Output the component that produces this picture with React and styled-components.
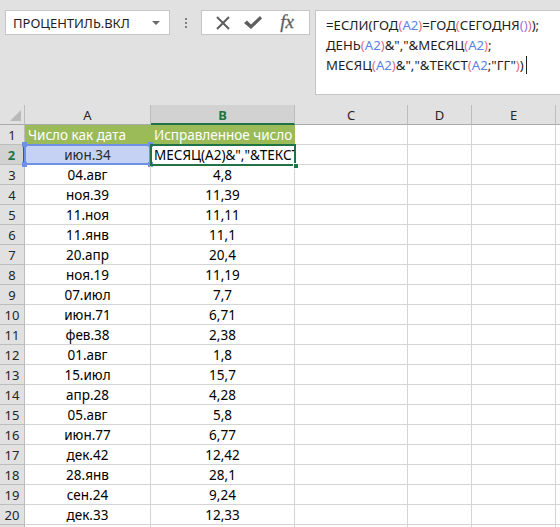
import React from "react";
import styled, { createGlobalStyle, css } from "styled-components";

const Global = createGlobalStyle`
  html, body { margin: 0; padding: 0; background: #fff; }
  body { font-family: "Noto Sans", "Open Sans", sans-serif; }
  * { box-sizing: border-box; }
`;

const Page = styled.div`
  width: 560px;
  height: 527px;
  overflow: hidden;
  background: #fff;
`;

const TopBar = styled.div`
  height: 105px;
  background: #e1e1e1;
  display: flex;
  align-items: flex-start;
  padding-top: 10px;
`;

const NameBox = styled.div`
  margin-left: 5px;
  width: 165px;
  height: 25px;
  background: #fff;
  border: 1px solid #c6c6c6;
  display: flex;
  align-items: center;
  justify-content: space-between;
  padding: 0 7px 0 7px;
  font-size: 13px;
  color: #1e1e1e;
`;

const DropArrow = styled.span`
  width: 0;
  height: 0;
  border-left: 4px solid transparent;
  border-right: 4px solid transparent;
  border-top: 4px solid #6a6a6a;
  margin-right: 2px;
`;

const Dots = styled.div`
  width: 31px;
  height: 25px;
  display: flex;
  flex-direction: column;
  align-items: center;
  justify-content: center;
  gap: 2px;
  span {
    width: 2px;
    height: 2px;
    background: #808080;
  }
`;

const IconBox = styled.div`
  width: 109px;
  height: 25px;
  background: #fff;
  border: 1px solid #c6c6c6;
  display: flex;
  align-items: center;
  padding-left: 9px;
`;

const IconSlot = styled.div`
  width: ${(p) => p.$w}px;
  display: flex;
  align-items: center;
  justify-content: center;
`;

const Fx = styled.span`
  font-family: "Liberation Serif", "DejaVu Serif", serif;
  font-style: italic;
  font-size: 19px;
  color: #5e5e5e;
  line-height: 1;
  margin-top: -2px;
  -webkit-text-stroke: 0.3px #5e5e5e;
`;

const FormulaBar = styled.div`
  margin-left: 5px;
  flex: 1;
  height: 85px;
  background: #fff;
  border: 1px solid #c6c6c6;
  border-right: none;
  padding: 4px 0 0 10px;
  font-size: 13.2px;
  line-height: 20px;
  color: #1e1e1e;
`;

const Line = styled.div`
  white-space: nowrap;
`;

const colors = { p: "#ea6b8b", b: "#5a84e4", v: "#a56ee0" };
const Tok = styled.span`
  color: ${(p) => colors[p.$c] || "#1e1e1e"};
`;

const Caret = styled.span`
  display: inline-block;
  width: 1px;
  height: 18px;
  background: #222;
  vertical-align: -4px;
  margin-left: 2px;
`;

const Grid = styled.div`
  display: grid;
  grid-template-columns: 25px 126px 144px 113px 64px 84px 1fr;
  grid-auto-rows: 20px;
`;

const HeadCell = styled.div`
  background: ${(p) => (p.$sel ? "#d2d2d2" : "#e1e1e1")};
  border-right: 1px solid #bdbdbd;
  border-bottom: ${(p) => (p.$sel ? "2px solid #217346" : "1px solid #ababab")};
  display: flex;
  align-items: center;
  justify-content: center;
  font-size: 13px;
  color: ${(p) => (p.$sel ? "#217346" : "#262626")};
  font-weight: ${(p) => (p.$sel ? 700 : 400)};
  padding-top: ${(p) => (p.$sel ? "1px" : "0")};
`;

const Corner = styled.div`
  background: #e1e1e1;
  border-right: 1px solid #bdbdbd;
  border-bottom: 1px solid #ababab;
  position: relative;
  &::after {
    content: "";
    position: absolute;
    right: 3px;
    bottom: 3px;
    width: 11px;
    height: 11px;
    background: #b9b9b9;
    clip-path: polygon(100% 0, 100% 100%, 0 100%);
  }
`;

const RowHead = styled.div`
  background: ${(p) => (p.$sel ? "#d2d2d2" : "#e1e1e1")};
  border-right: ${(p) => (p.$sel ? "2px solid #217346" : "1px solid #bdbdbd")};
  border-bottom: 1px solid #bdbdbd;
  display: flex;
  align-items: center;
  justify-content: center;
  font-size: 13px;
  color: ${(p) => (p.$sel ? "#217346" : "#262626")};
  font-weight: ${(p) => (p.$sel ? 700 : 400)};
`;

const Cell = styled.div`
  position: relative;
  border-right: 1px solid #d4d4d4;
  border-bottom: 1px solid #d4d4d4;
  display: flex;
  align-items: center;
  justify-content: ${(p) => (p.$left ? "flex-start" : "center")};
  padding: 0 3px;
  font-size: 13.5px;
  color: #000;
  white-space: nowrap;
  ${(p) =>
    p.$green &&
    css`
      background: #9bbb59;
      border-right-color: #9bbb59;
      color: #fff;
    `}
  ${(p) =>
    p.$range &&
    css`
      background: #c6d2f4;
      color: #2a2a2a;
    `}
  ${(p) =>
    p.$clip &&
    css`
      overflow: hidden;
      height: 100%;
    `}
`;

const RangeFrame = styled.div`
  position: absolute;
  left: -1px;
  top: -1px;
  right: -1px;
  bottom: -1px;
  border: 2px solid #6d91e6;
  pointer-events: none;
`;

const Handle = styled.span`
  position: absolute;
  width: 5px;
  height: 5px;
  background: ${(p) => p.$color};
  ${(p) => (p.$t ? "top: -3px;" : "bottom: -3px;")}
  ${(p) => (p.$l ? "left: -3px;" : "right: -3px;")}
`;

const ActiveFrame = styled.div`
  position: absolute;
  left: -1px;
  top: -1px;
  right: -1px;
  bottom: -1px;
  border: 2px solid #217346;
  pointer-events: none;
`;

const FillHandle = styled.span`
  position: absolute;
  right: -4px;
  bottom: -4px;
  width: 6px;
  height: 6px;
  background: #217346;
  border: 1px solid #fff;
`;

const ActiveWrap = styled.div`
  position: relative;
  z-index: 2;
`;

const data = [
  ["04.авг", "4,8"],
  ["ноя.39", "11,39"],
  ["11.ноя", "11,11"],
  ["11.янв", "11,1"],
  ["20.апр", "20,4"],
  ["ноя.19", "11,19"],
  ["07.июл", "7,7"],
  ["июн.71", "6,71"],
  ["фев.38", "2,38"],
  ["01.авг", "1,8"],
  ["15.июл", "15,7"],
  ["апр.28", "4,28"],
  ["05.авг", "5,8"],
  ["июн.77", "6,77"],
  ["дек.42", "12,42"],
  ["28.янв", "28,1"],
  ["сен.24", "9,24"],
  ["дек.33", "12,33"],
];

const EmptyTail = () => (
  <>
    <Cell />
    <Cell />
    <Cell />
    <Cell />
  </>
);

export default function App() {
  return (
    <Page>
      <Global />
      <TopBar>
        <NameBox>
          <span>ПРОЦЕНТИЛЬ.ВКЛ</span>
          <DropArrow />
        </NameBox>
        <Dots>
          <span />
          <span />
          <span />
        </Dots>
        <IconBox>
          <IconSlot $w={24}>
            <svg width="16" height="14" viewBox="0 0 16 14">
              <path d="M2 1 L14 13 M14 1 L2 13" stroke="#5e5e5e" strokeWidth="2" fill="none" />
            </svg>
          </IconSlot>
          <IconSlot $w={36}>
            <svg width="20" height="15" viewBox="0 0 20 15">
              <path d="M1 8 L4 5.5 L8 9.5 L17 1 L19 3.5 L8 14 Z" fill="#5e5e5e" />
            </svg>
          </IconSlot>
          <IconSlot $w={32}>
            <Fx>fx</Fx>
          </IconSlot>
        </IconBox>
        <FormulaBar>
          <Line>
            <Tok>=ЕСЛИ(ГОД</Tok>
            <Tok $c="p">(</Tok>
            <Tok $c="b">А2</Tok>
            <Tok $c="p">)</Tok>
            <Tok>=ГОД</Tok>
            <Tok $c="p">(</Tok>
            <Tok>СЕГОДНЯ</Tok>
            <Tok $c="v">()</Tok>
            <Tok $c="p">)</Tok>
            <Tok>);</Tok>
          </Line>
          <Line>
            <Tok>ДЕНЬ</Tok>
            <Tok $c="p">(</Tok>
            <Tok $c="b">А2</Tok>
            <Tok $c="p">)</Tok>
            <Tok>&amp;","&amp;МЕСЯЦ</Tok>
            <Tok $c="p">(</Tok>
            <Tok $c="b">А2</Tok>
            <Tok $c="p">)</Tok>
            <Tok>;</Tok>
          </Line>
          <Line>
            <Tok>МЕСЯЦ</Tok>
            <Tok $c="p">(</Tok>
            <Tok $c="b">А2</Tok>
            <Tok $c="p">)</Tok>
            <Tok>&amp;","&amp;ТЕКСТ</Tok>
            <Tok $c="p">(</Tok>
            <Tok $c="b">А2</Tok>
            <Tok>;"ГГ"</Tok>
            <Tok $c="p">)</Tok>
            <Tok>)</Tok>
            <Caret />
          </Line>
        </FormulaBar>
      </TopBar>
      <Grid>
        <Corner />
        <HeadCell>A</HeadCell>
        <HeadCell $sel>B</HeadCell>
        <HeadCell>C</HeadCell>
        <HeadCell>D</HeadCell>
        <HeadCell>E</HeadCell>
        <HeadCell />

        <RowHead>1</RowHead>
        <Cell $green $left>Число как дата</Cell>
        <Cell $green $left>Исправленное число</Cell>
        <Cell />
        <Cell />
        <Cell />
        <Cell />

        <RowHead $sel>2</RowHead>
        <Cell $range>
          июн.34
          <RangeFrame />
          <Handle $color="#6d91e6" $t $l />
          <Handle $color="#6d91e6" $t />
          <Handle $color="#6d91e6" $l />
          <Handle $color="#6d91e6" />
        </Cell>
        <ActiveWrap>
          <Cell $left $clip>
            МЕСЯЦ(А2)&amp;","&amp;ТЕКСТ(А2;"ГГ"))
          </Cell>
          <ActiveFrame />
          <FillHandle />
        </ActiveWrap>
        <Cell />
        <Cell />
        <Cell />
        <Cell />

        {data.map(([a, b], i) => (
          <React.Fragment key={i}>
            <RowHead>{i + 3}</RowHead>
            <Cell>{a}</Cell>
            <Cell>{b}</Cell>
            <EmptyTail />
          </React.Fragment>
        ))}
        <RowHead />
        <Cell />
        <Cell />
        <EmptyTail />
      </Grid>
    </Page>
  );
}
